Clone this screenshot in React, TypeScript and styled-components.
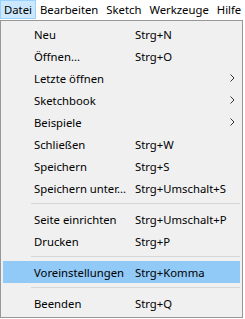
import React from "react";
import styled, { createGlobalStyle } from "styled-components";

const Global = createGlobalStyle`
  html, body { margin: 0; padding: 0; background: #ffffff; }
  body { font-family: "Noto Sans", "Segoe UI", "Liberation Sans", sans-serif; font-size: 11.3px; color: #000; }
`;

const Bar = styled.div`
  display: flex;
  height: 19px;
  align-items: stretch;
  background: #ffffff;
`;

const BarItem = styled.div<{ $open?: boolean }>`
  display: flex;
  align-items: center;
  padding: 0 3px;
  box-sizing: border-box;
  border: 1px solid ${(p) => (p.$open ? "#99d1ff" : "transparent")};
  background: ${(p) => (p.$open ? "#cce8ff" : "transparent")};
  line-height: 17px;
  white-space: nowrap;
`;

const Menu = styled.div`
  box-sizing: border-box;
  width: 243px;
  margin-top: 1px;
  border: 1px solid #979797;
  background: #f0f0f0;
  padding: 2px 2px 3px 2px;
`;

const Item = styled.div<{ $active?: boolean }>`
  display: grid;
  grid-template-columns: 101px 1fr 10px;
  align-items: center;
  height: 22px;
  padding-left: 31px;
  background: ${(p) => (p.$active ? "#91c9f7" : "transparent")};
  white-space: nowrap;
`;

const Label = styled.span``;
const Shortcut = styled.span``;

const Arrow = styled.svg`
  width: 5px;
  height: 8px;
`;

const Sep = styled.div`
  height: 9px;
  display: flex;
  align-items: center;
  padding-left: 28px;
  &::after {
    content: "";
    flex: 1;
    height: 1px;
    background: #d7d7d7;
  }
`;

type Entry =
  | { label: string; shortcut?: string; sub?: boolean; active?: boolean }
  | "sep";

const entries: Entry[] = [
  { label: "Neu", shortcut: "Strg+N" },
  { label: "Öffnen...", shortcut: "Strg+O" },
  { label: "Letzte öffnen", sub: true },
  { label: "Sketchbook", sub: true },
  { label: "Beispiele", sub: true },
  { label: "Schließen", shortcut: "Strg+W" },
  { label: "Speichern", shortcut: "Strg+S" },
  { label: "Speichern unter...", shortcut: "Strg+Umschalt+S" },
  "sep",
  { label: "Seite einrichten", shortcut: "Strg+Umschalt+P" },
  { label: "Drucken", shortcut: "Strg+P" },
  "sep",
  { label: "Voreinstellungen", shortcut: "Strg+Komma", active: true },
  "sep",
  { label: "Beenden", shortcut: "Strg+Q" },
];

export default function App() {
  return (
    <>
      <Global />
      <Bar>
        <BarItem $open>Datei</BarItem>
        <BarItem>Bearbeiten</BarItem>
        <BarItem>Sketch</BarItem>
        <BarItem>Werkzeuge</BarItem>
        <BarItem>Hilfe</BarItem>
      </Bar>
      <Menu>
        {entries.map((e, i) =>
          e === "sep" ? (
            <Sep key={i} />
          ) : (
            <Item key={i} $active={e.active}>
              <Label>{e.label}</Label>
              <Shortcut>{e.shortcut ?? ""}</Shortcut>
              {e.sub ? (
                <Arrow viewBox="0 0 5 8">
                  <path d="M0.5 0.5 L4 4 L0.5 7.5" fill="none" stroke="#333" strokeWidth="1" />
                </Arrow>
              ) : (
                <span />
              )}
            </Item>
          )
        )}
      </Menu>
    </>
  );
}
